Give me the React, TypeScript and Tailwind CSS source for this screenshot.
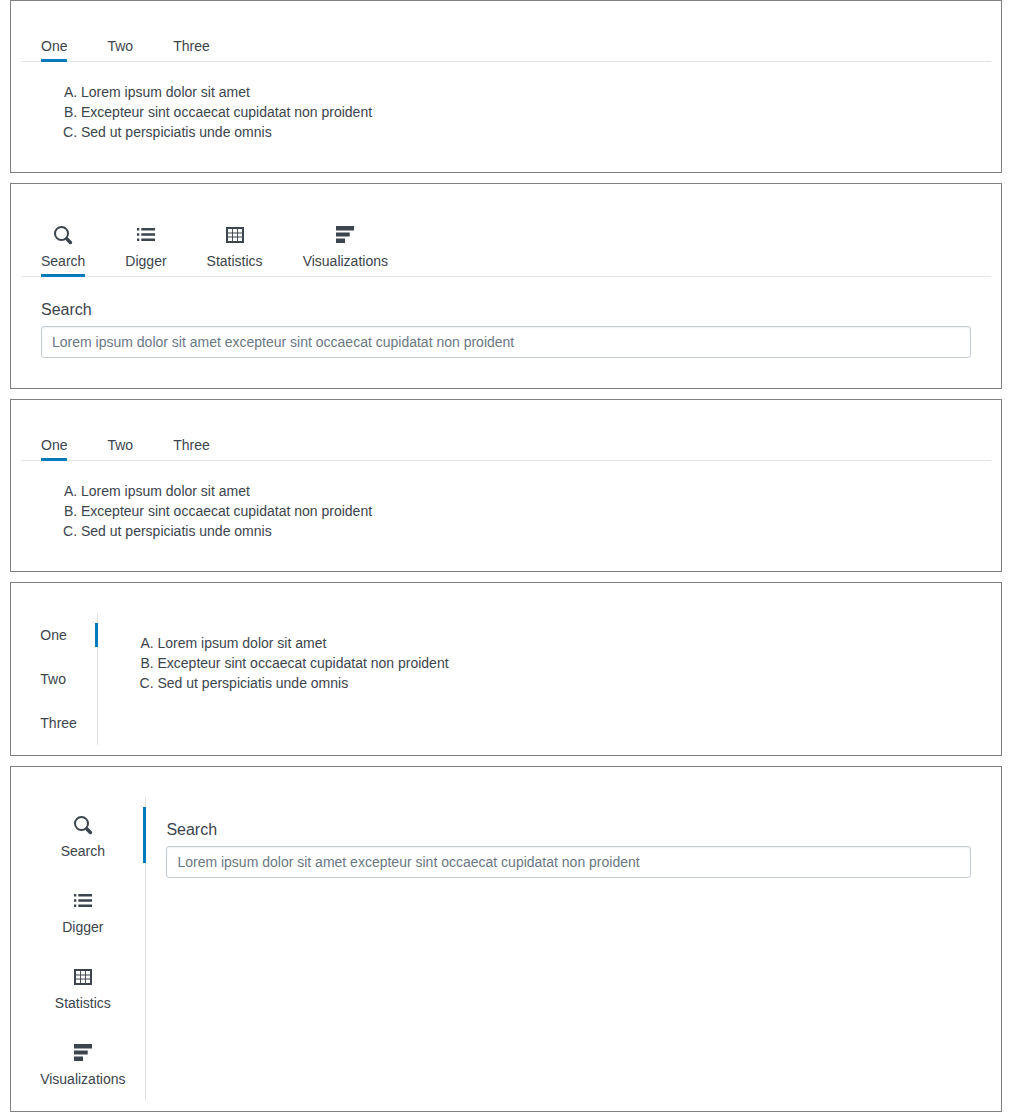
import type { ReactNode } from 'react';

function SearchIcon() {
  return (
    <svg width="18" height="18" viewBox="0 0 18 18" className="block overflow-visible" fill="none" stroke="currentColor">
      <circle cx="7.5" cy="7.5" r="6.5" strokeWidth="2" />
      <path d="M11.6 11.6L13.2 13.2" strokeWidth="2.4" />
      <path d="M13.2 13.2L16.4 16.4" strokeWidth="3.6" strokeLinecap="round" />
    </svg>
  );
}

function DiggerIcon() {
  return (
    <svg width="18" height="18" viewBox="0 0 18 18" className="block" fill="currentColor">
      <path d="M0 2h2.3v2.4H0zM4.3 2H18v2.4H4.3zM0 7.3h2.3v2.4H0zM4.3 7.3H18v2.4H4.3zM0 12.6h2.3V15H0zM4.3 12.6H18V15H4.3z" />
    </svg>
  );
}

function StatisticsIcon() {
  return (
    <svg width="18" height="18" viewBox="0 0 18 18" className="block" fill="currentColor">
      <path
        fillRule="evenodd"
        d="M0 1h18v16H0zM2 3v3.5h4.1V3zM7 3v3.5h4V3zM11.9 3v3.5H16V3zM2 7.5v3h4.1v-3zM7 7.5v3h4v-3zM11.9 7.5v3H16v-3zM2 11.5V15h4.1v-3.5zM7 11.5V15h4v-3.5zM11.9 11.5V15H16v-3.5z"
      />
    </svg>
  );
}

function VisualizationsIcon() {
  return (
    <svg width="18" height="18" viewBox="0 0 18 18" className="block" fill="currentColor">
      <path d="M0 0h18v4.5H0zM0 6.5h13.7v4.1H0zM0 12.5h9V17H0z" />
    </svg>
  );
}

type Tab = { label: string; icon?: ReactNode };

const plainTabs: Tab[] = [{ label: 'One' }, { label: 'Two' }, { label: 'Three' }];

const iconTabs: Tab[] = [
  { label: 'Search', icon: <SearchIcon /> },
  { label: 'Digger', icon: <DiggerIcon /> },
  { label: 'Statistics', icon: <StatisticsIcon /> },
  { label: 'Visualizations', icon: <VisualizationsIcon /> },
];

function HorizontalTabs({ tabs, className }: { tabs: Tab[]; className: string }) {
  return (
    <div className={`flex items-end gap-10 border-b px-5 ${className}`}>
      {tabs.map((tab, i) => (
        <button
          key={tab.label}
          className={`-mb-px flex flex-col items-center border-b-3 pb-[3px] ${i === 0 ? 'border-[#007abd]' : 'border-transparent'}`}
        >
          {tab.icon && <span className="mb-[7px]">{tab.icon}</span>}
          {tab.label}
        </button>
      ))}
    </div>
  );
}

function VerticalTabs({ tabs, className }: { tabs: Tab[]; className: string }) {
  return (
    <div className={`flex shrink-0 flex-col gap-5 border-r border-[#e3e3e3] py-2.5 ${className}`}>
      {tabs.map((tab, i) => (
        <button
          key={tab.label}
          className={`-mr-px flex flex-col border-r-3 pr-[17.7px] pl-[19.3px] ${tab.icon ? 'h-14 items-center pt-[9px]' : 'h-6 items-start pt-0.5'} ${i === 0 ? 'border-[#007abd]' : 'border-transparent'}`}
        >
          {tab.icon && <span className="mb-[7px]">{tab.icon}</span>}
          {tab.label}
        </button>
      ))}
    </div>
  );
}

function LetterList({ className }: { className: string }) {
  return (
    <ol className={`list-[upper-alpha] ${className}`}>
      <li>Lorem ipsum dolor sit amet</li>
      <li>Excepteur sint occaecat cupidatat non proident</li>
      <li>Sed ut perspiciatis unde omnis</li>
    </ol>
  );
}

function SearchField() {
  return (
    <label className="block">
      <span className="block text-base leading-5">Search</span>
      <input
        className="mt-1.5 block h-8 w-full rounded-[3px] border border-[#c3cbd4] bg-white px-2.5 shadow-[inset_0_1px_2px_rgba(0,0,0,0.06)] outline-none placeholder:text-[#6b7785]"
        placeholder="Lorem ipsum dolor sit amet excepteur sint occaecat cupidatat non proident"
      />
    </label>
  );
}

function Panel({ className, children }: { className: string; children: ReactNode }) {
  return <section className={`border border-[#808080] px-2.5 ${className}`}>{children}</section>;
}

export default function App() {
  return (
    <main className="flex h-[1112px] w-[1012px] flex-col gap-2.5 bg-white px-2.5 font-['Liberation_Sans',Arial,sans-serif] text-sm leading-5 text-[#3c444d]">
      <Panel className="h-[173px]">
        <HorizontalTabs tabs={plainTabs} className="h-[61px] border-[#e3e3e3]" />
        <LetterList className="pt-5 pl-[60px]" />
      </Panel>
      <Panel className="h-[206px]">
        <HorizontalTabs tabs={iconTabs} className="h-[93px] border-[#e1e6eb]" />
        <div className="px-5 pt-[23px]">
          <SearchField />
        </div>
      </Panel>
      <Panel className="h-[173px]">
        <HorizontalTabs tabs={plainTabs} className="h-[61px] border-[#e3e3e3]" />
        <LetterList className="pt-5 pl-[60px]" />
      </Panel>
      <Panel className="flex h-[174px] pt-[30px] pb-2.5">
        <VerticalTabs tabs={plainTabs} className="w-[77px]" />
        <LetterList className="pt-5 pl-[59.5px]" />
      </Panel>
      <Panel className="flex h-[346px] pt-[30px] pb-2.5">
        <VerticalTabs tabs={iconTabs} className="w-[125px]" />
        <div className="grow pt-[23px] pr-5 pl-[20.4px]">
          <SearchField />
        </div>
      </Panel>
    </main>
  );
}
